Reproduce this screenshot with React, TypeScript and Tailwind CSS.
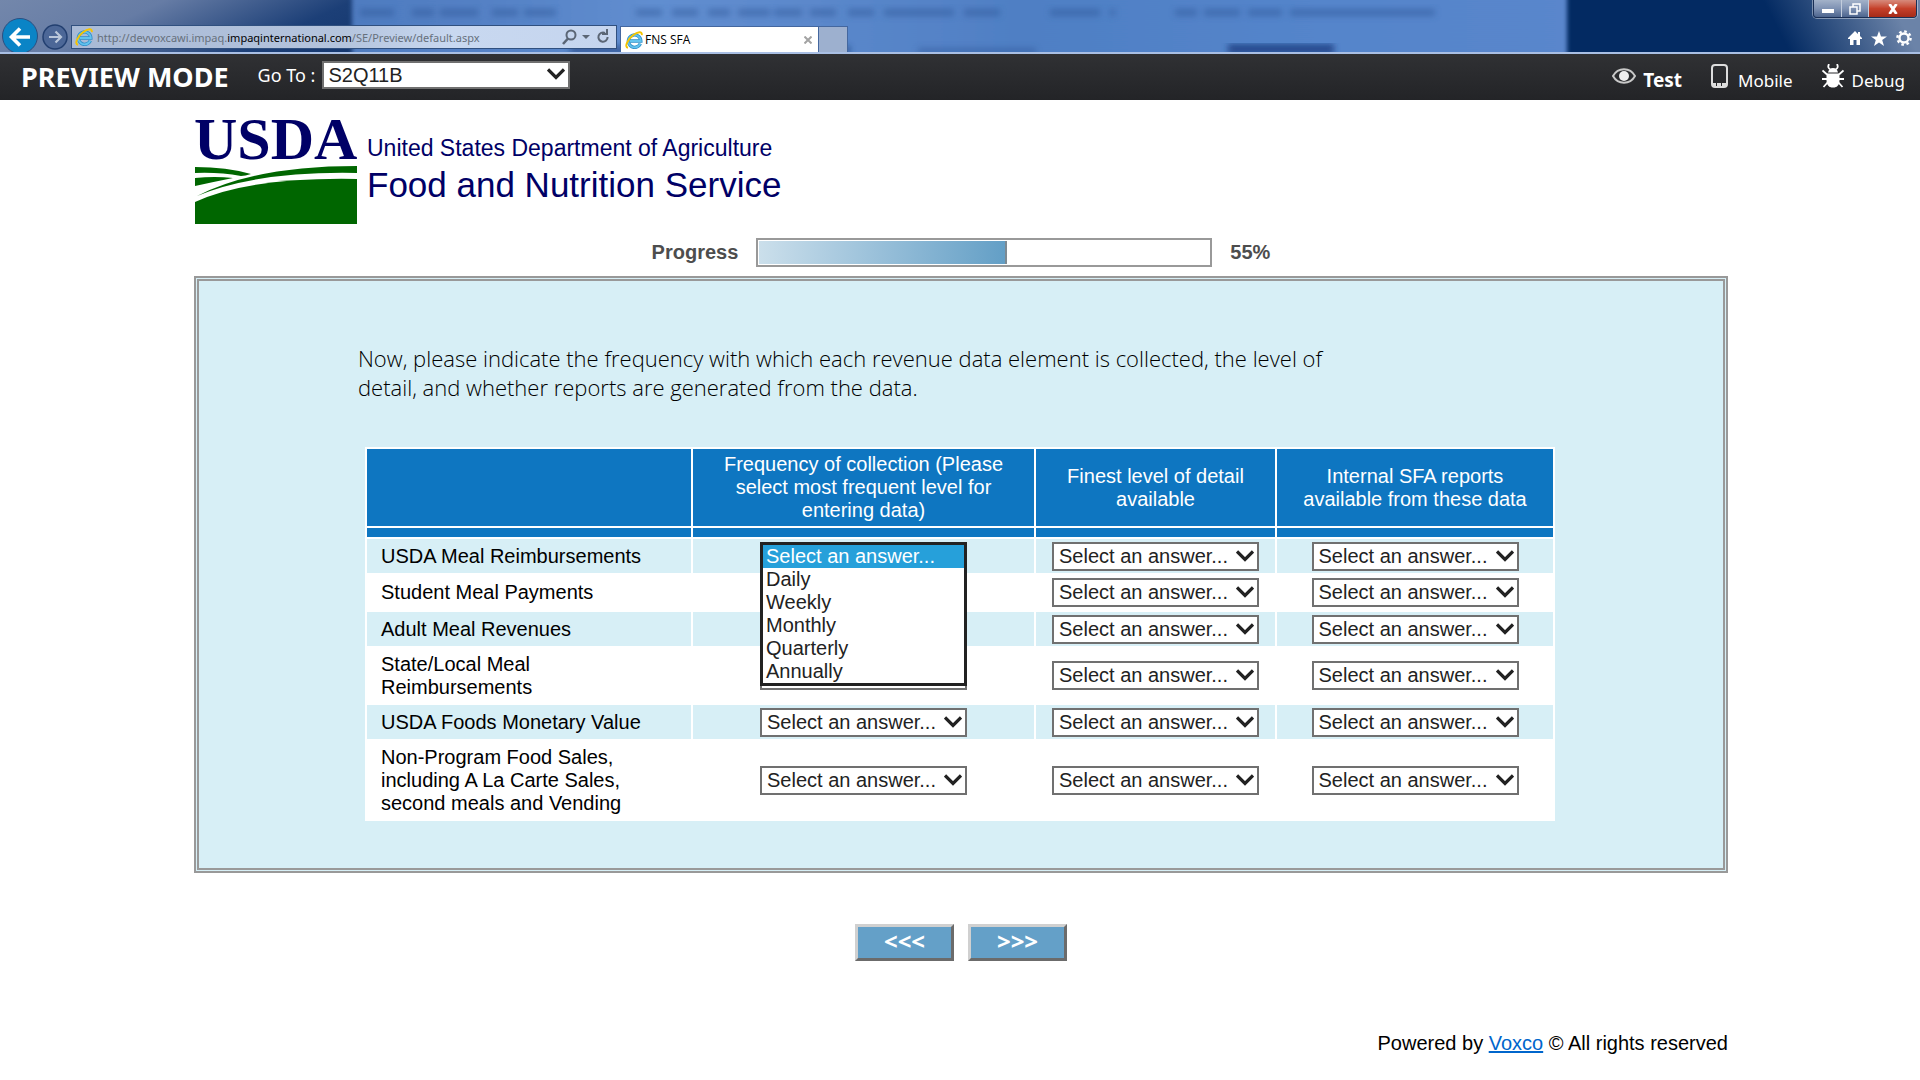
import React, { useState } from 'react'

const FREQUENCIES = ['Select an answer...', 'Daily', 'Weekly', 'Monthly', 'Quarterly', 'Annually']
const DETAILS = ['Select an answer...', 'School', 'District']
const REPORTS = ['Select an answer...', 'Yes', 'No']

interface Question {
  id: string
  label: string
  height: string
}

const questions: Question[] = [
  { id: 'reimb', label: 'USDA Meal Reimbursements', height: 'h-[34px]' },
  { id: 'student', label: 'Student Meal Payments', height: 'h-[35px]' },
  { id: 'adult', label: 'Adult Meal Revenues', height: 'h-[34px]' },
  { id: 'state', label: 'State/Local Meal Reimbursements', height: 'h-[55px]' },
  { id: 'foods', label: 'USDA Foods Monetary Value', height: 'h-[34px]' },
  { id: 'nonprogram', label: 'Non-Program Food Sales, including A La Carte Sales, second meals and Vending', height: 'h-[78px]' },
]

// blurred desktop text showing through the glass frame: [x, width]
const ghosts = [
  [360, 34], [412, 22], [440, 38], [492, 26], [524, 32],
  [636, 26], [672, 26], [708, 22], [738, 32], [774, 28], [810, 26], [848, 26], [884, 70], [964, 36],
  [1050, 50], [1110, 5], [1175, 22], [1204, 36], [1248, 34], [1290, 145],
]

const Chevron = ({ className }: { className: string }) => (
  <svg viewBox="0 0 18 12" className={`pointer-events-none absolute h-3 w-[18px] ${className}`} fill="none" stroke="#222" strokeWidth="3.2">
    <path d="M1 1.5 9 9.5 17 1.5" />
  </svg>
)

const IeLogo = () => (
  <svg viewBox="0 0 18 18" className="h-[18px] w-[18px] shrink-0" fill="none">
    <path d="M15.300 12.600A6.200 6.200 0 1 1 15.800 10H5" stroke="#2f8fc9" strokeWidth="3.400" />
    <path d="M15.300 12.600A6.200 6.200 0 1 1 15.800 10H5" stroke="#62c3ee" strokeWidth="1.800" />
    <path d="M3 16.800C-1 16 2.500 8.500 8 4.300 12.500.8 17.500-.4 16.800 4.200" stroke="#f5c400" strokeWidth="1.900" />
  </svg>
)

interface AnswerProps {
  label: string
  options: string[]
  open?: boolean
}

const Answer: React.FC<AnswerProps> = ({ label, options, open }) => {
  const [value, setValue] = useState(options[0])
  const [expanded, setExpanded] = useState(!!open)

  return (
    <div className="relative mx-auto h-[29px] w-[207px]">
      <select
        aria-label={label}
        value={value}
        onChange={e => setValue(e.target.value)}
        className="block h-full w-full appearance-none border-2 border-[#707070] bg-white pl-[5px] text-[20px] leading-[23px] text-[#222]"
      >
        {options.map(o => <option key={o}>{o}</option>)}
      </select>
      <Chevron className="right-[5px] top-2" />
      {expanded && (
        <ul role="listbox" aria-label={label} className="absolute left-0 top-0 z-10 w-full border-[3px] border-[#222] bg-white text-left text-[20px] leading-[23px] text-[#222]">
          {options.map(o => (
            <li
              key={o}
              role="option"
              aria-selected={o === value}
              onClick={() => { setValue(o); setExpanded(false) }}
              className={`pl-[3px] ${o === value ? 'bg-[#26a0da] text-white' : ''}`}
            >
              {o}
            </li>
          ))}
        </ul>
      )}
    </div>
  )
}

const BrowserBar = () => (
  <header className="relative flex h-[54px] items-end border-b-2 border-[#a9bfe4] bg-[linear-gradient(155deg,#7387ab_0px,#667ca5_70px,#1c3f77_150px,#0a2c64_260px)] font-['Open_Sans',sans-serif]">
    <svg className="absolute inset-0 h-full w-full" preserveAspectRatio="none" viewBox="0 0 1920 52">
      <defs>
        <linearGradient id="glass" x1="0" x2="1" y1="0" y2="0">
          <stop offset="0" stopColor="#4f7cc0" />
          <stop offset=".1" stopColor="#5380c4" />
          <stop offset=".25" stopColor="#618ed0" />
          <stop offset=".38" stopColor="#5b88cb" />
          <stop offset=".55" stopColor="#4f7fc4" />
          <stop offset=".8" stopColor="#5485cb" />
          <stop offset="1" stopColor="#5a86cc" />
        </linearGradient>
        <linearGradient id="corner" gradientUnits="userSpaceOnUse" x1="1790" y1="52" x2="1890" y2="0">
          <stop offset="0" stopColor="#032a62" />
          <stop offset="1" stopColor="#6b83a8" />
        </linearGradient>
        <filter id="soft"><feGaussianBlur stdDeviation="3" /></filter>
        <filter id="edge"><feGaussianBlur stdDeviation="2 0" /></filter>
      </defs>
      <rect x="1566" width="354" height="54" fill="url(#corner)" />
      <rect x="352" y="-4" width="1215" height="62" fill="url(#glass)" filter="url(#edge)" />
      <g filter="url(#soft)" fill="#2f5798" opacity=".5">
        {ghosts.map(([x, w]) => <rect key={x} x={x} y="9" width={w} height="7" />)}
        <rect x="570" y="46" width="280" height="8" fill="#0d2f68" />
        <rect x="918" y="48" width="118" height="6" />
      </g>
      <rect x="1228" y="44" width="106" height="10" fill="#1a4183" opacity=".85" filter="url(#soft)" />
    </svg>
    <nav className="relative flex w-full items-end">
      <button aria-label="Back" className="ml-[2px] h-[34px] w-9 overflow-hidden">
        <svg viewBox="0 0 36 34" className="h-[34px] w-9">
          <circle cx="18" cy="18" r="17.500" fill="#0a84c6" stroke="#2c4f80" />
          <path d="M28 19H10M18 10.500 9.500 19 18 27.500" stroke="#fff" strokeWidth="3.600" fill="none" />
        </svg>
      </button>
      <button aria-label="Forward" className="mb-[1px] ml-1 h-7 w-[26px]">
        <svg viewBox="0 0 26 28" className="h-7 w-[26px]">
          <circle cx="13" cy="14" r="12" fill="#4c6797" stroke="#223f70" strokeWidth="1.500" />
          <path d="M7 14H19M13.500 8.500 19 14 13.500 19.500" stroke="#b9c6da" strokeWidth="2.200" fill="none" />
        </svg>
      </button>
      <div className="mb-[3px] ml-[3px] flex h-6 w-[546px] items-center border border-[#30507f] bg-[linear-gradient(90deg,#a9bad6,#b4c4dd_50%,#c8d8f0_70%,#c5d5ee)] pl-[3px]">
        <IeLogo />
        <span className="ml-1 flex-1 whitespace-nowrap font-['Noto_Sans',sans-serif] text-[11px] text-[#66707c]">
          http://devvoxcawi.impaq.<span className="text-black">impaqinternational.com</span>/SE/Preview/default.aspx
        </span>
        <svg viewBox="0 0 54 16" className="h-4 w-[54px]" fill="none" stroke="#5b6675" strokeWidth="2">
          <circle cx="9" cy="6" r="4.500" />
          <path d="M6 9.500 1 15" strokeWidth="2.600" />
          <path d="M20 6h8l-4 4z" fill="#5b6675" stroke="none" />
          <path d="M43 4A4.600 4.600 0 1 0 45.600 8" />
          <path d="M40 5h5V0" />
        </svg>
      </div>
      <div className="ml-[3px] flex h-[26px] w-[199px] items-center border-x border-t border-[#44679f] bg-white pl-1 pr-[6px]">
        <IeLogo />
        <span className="ml-[2px] flex-1 text-[12px] text-black">FNS SFA</span>
        <button aria-label="Close tab">
          <svg viewBox="0 0 8 8" className="h-2 w-2" stroke="#a3a3a3" strokeWidth="2"><path d="M.5.5l7 7M7.500.5l-7 7" /></svg>
        </button>
      </div>
      <button aria-label="New tab" className="h-[26px] w-[29px] border-r border-t border-[#44679f] bg-[#9db0cf]" />
      <div className="mb-[6px] ml-auto mr-2 flex items-center gap-[9px]">
        <button aria-label="Home">
          <svg viewBox="0 0 14 14" className="h-[14px] w-[14px]" fill="#fff"><path d="M7 0 0 7v1h2v6h3.500V9h3v5H12V8h2V7l-2-2V1h-2v2z" /></svg>
        </button>
        <button aria-label="Favorites">
          <svg viewBox="0 0 16 15" className="h-[15px] w-4" fill="#fff"><path d="m8 0 2 5.500h6L11.200 9 13 15 8 11.400 3 15l1.800-6L0 5.500h6z" /></svg>
        </button>
        <button aria-label="Tools">
          <svg viewBox="0 0 16 16" className="h-4 w-4" fill="none" stroke="#fff">
            <circle cx="8" cy="8" r="4.500" strokeWidth="2.400" />
            <circle cx="8" cy="8" r="6.600" strokeWidth="2.400" strokeDasharray="2.600 2.580" />
          </svg>
        </button>
      </div>
    </nav>
    <div className="absolute right-[3px] top-0 flex h-[18px] w-[104px] overflow-hidden rounded-b border border-t-0 border-[#1a2f55] ring-1 ring-white/40">
      <button aria-label="Minimize" className="flex w-[28px] items-center justify-center border-r border-[#c3cddd] bg-linear-to-b from-[#a3b2c9] via-[#7f92b3] to-[#4d658e]">
        <span className="mt-1 h-1 w-3 bg-white" />
      </button>
      <button aria-label="Restore" className="flex w-[27px] items-center justify-center border-r border-[#c3cddd] bg-linear-to-b from-[#a3b2c9] via-[#7f92b3] to-[#4d658e]">
        <svg viewBox="0 0 12 12" className="h-3 w-3" fill="none" stroke="#fff" strokeWidth="1.500"><path d="M1 4h7v7H1zM4 3.500V1h7v7H8.500" /></svg>
      </button>
      <button aria-label="Close" className="flex flex-1 items-center justify-center bg-linear-to-b from-[#d68a7c] via-[#c5402a] to-[#a52a18]">
        <svg viewBox="0 0 12 10" className="h-[10px] w-3" stroke="#fff" strokeWidth="2.800"><path d="M2.500 0l7 10M9.500 0l-7 10" /></svg>
      </button>
    </div>
  </header>
)

const PreviewBar = () => (
  <div className="flex h-[46px] items-center bg-linear-to-b from-[#303134] to-[#232427] pl-[21px] pr-[15px] font-['Noto_Sans',sans-serif] text-white">
    <strong className="text-[27px] leading-[46px]">PREVIEW MODE</strong>
    <label htmlFor="goto" className="ml-[29px] pb-1 text-[18px]">Go To :</label>
    <div className="relative mb-1 ml-[7px] h-7 w-[248px]">
      <select id="goto" defaultValue="S2Q11B" className="block h-full w-full appearance-none border-2 border-[#707070] bg-white pl-1 font-['Liberation_Sans',sans-serif] text-[20px] leading-6 text-[#222]">
        <option>S2Q11B</option>
      </select>
      <Chevron className="right-[5px] top-[7px]" />
    </div>
    <div className="ml-auto flex items-center gap-[29px] pt-[6px] text-[17px]">
      <button className="flex items-center gap-[7px] text-[19px] font-bold">
        <svg viewBox="0 0 24 16" className="mb-2 h-4 w-6" fill="none" stroke="#c8c8c8" strokeWidth="2">
          <path d="M1 8C6-1 18-1 23 8 18 17 6 17 1 8z" />
          <circle cx="12" cy="8" r="5" fill="#eee" stroke="none" />
        </svg>
        Test
      </button>
      <button className="flex items-center gap-[9px]">
        <svg viewBox="0 0 18 24" className="mb-2 h-6 w-[18px]" fill="none" stroke="#ddd" strokeWidth="2">
          <rect x="1" y="1" width="15" height="22" rx="3" />
          <path d="M1 20.500h15" strokeWidth="3" strokeDasharray="4 1" />
        </svg>
        Mobile
      </button>
      <button className="flex items-center gap-2">
        <svg viewBox="0 0 22 24" className="mb-2 h-6 w-[22px]" fill="#fff" stroke="#fff">
          <path d="M7 0Q5 4 8.500 5.500M15 0q2 4-1.500 5.500M.5 6.500 5 10.500M21.500 6.500 17 10.500M0 15h5M22 15h-5M1.500 23 6 18M20.500 23 16 18" fill="none" strokeWidth="1.800" />
          <path d="M6 8.500Q7 4 11 4t5 4.500zM4.500 9.500h13v7q0 6-5 7h-3q-5-1-5-7z" stroke="none" />
        </svg>
        Debug
      </button>
    </div>
  </div>
)

const AgencyLogo = () => (
  <div className="flex h-[125px] gap-[10px] pt-[10px] text-[#000066]">
    <div className="w-[163px]">
      <div className="h-14 font-['Liberation_Serif',serif] text-[60px] font-bold leading-[58px]">USDA</div>
      <svg viewBox="0 0 162 58" className="ml-px block h-[58px] w-[162px]" fill="#006600">
        <path d="M0 1Q32 1 56 8Q50 10 46 10Q24 6 0 7z" />
        <path d="M0 12Q20 10 38 12Q18 16 0 20z" />
        <path d="M2 30Q60 0 162 0V7Q62 5 2 30z" />
        <path d="M0 36Q54 11 162 13V58H0z" />
      </svg>
    </div>
    <div className="pt-[25px]">
      <div className="text-[23px] leading-[26px]">United States Department of Agriculture</div>
      <div className="mt-[3px] text-[35px] leading-[42px]">Food and Nutrition Service</div>
    </div>
  </div>
)

export default function App() {
  const progress = 55

  return (
    <div className="min-h-screen bg-white font-['Liberation_Sans',Arial,sans-serif] text-[20px] leading-[23px] text-black">
      <BrowserBar />
      <PreviewBar />
      <main className="pl-[194px] pr-[192px]">
        <AgencyLogo />

        <div className="mt-[13px] flex items-center justify-center font-bold text-[#4d4d4d]">
          <span id="progress-label">Progress</span>
          <div role="progressbar" aria-labelledby="progress-label" aria-valuenow={progress} className="mx-[18px] h-[29px] w-[456px] border-2 border-[#999] bg-white p-[1px]">
            <div className="h-full border-r-2 border-[#7d8a92] bg-linear-to-r from-[#cbdfeb] to-[#639fc6]" style={{ width: `${progress}%` }} />
          </div>
          <span>{progress}%</span>
        </div>

        <section className="mt-[9px] border-[5px] border-double border-[#999] bg-[#d7eff6] px-[159px] pb-[47px] pt-[63px]">
          <p className="max-w-[980px] font-['Open_Sans',sans-serif] text-[22px] font-light leading-[29px]">
            Now, please indicate the frequency with which each revenue data element is collected, the level of detail, and whether reports are generated from the data.
          </p>

          <table className="ml-[7px] mt-[45px] w-[1190px] table-fixed border-separate border-spacing-[2px] bg-white">
            <colgroup>
              <col className="w-[324px]" />
              <col className="w-[341px]" />
              <col className="w-[239px]" />
              <col />
            </colgroup>
            <thead>
              <tr className="h-[77px] bg-[#0e76c1] text-white">
                <td />
                <th className="px-5 py-0 font-normal">Frequency of collection (Please select most frequent level for entering data)</th>
                <th className="px-5 py-0 font-normal">Finest level of detail available</th>
                <th className="px-5 py-0 font-normal">Internal SFA reports available from these data</th>
              </tr>
              <tr className="h-[9px] bg-[#0e76c1]">
                <td className="p-0" />
                <td className="p-0" />
                <td className="p-0" />
                <td className="p-0" />
              </tr>
            </thead>
            <tbody>
              {questions.map((q, i) => (
                <tr key={q.id} className={`${q.height} ${i % 2 === 0 ? 'bg-[#d7eff6]' : 'bg-white'}`}>
                  <th scope="row" className="py-0 pl-[14px] pr-4 text-left font-normal">{q.label}</th>
                  <td className="p-0"><Answer label={`${q.label} frequency`} options={FREQUENCIES} open={i === 0} /></td>
                  <td className="p-0"><Answer label={`${q.label} detail`} options={DETAILS} /></td>
                  <td className="p-0"><Answer label={`${q.label} reports`} options={REPORTS} /></td>
                </tr>
              ))}
            </tbody>
          </table>
        </section>

        <div className="mt-[51px] flex justify-center gap-[14px] font-['Noto_Sans',sans-serif] text-[24px] font-bold text-white">
          <button className="flex h-[37px] w-[99px] items-center justify-center border-[3px] border-b-[#6b6b6b] border-l-[#d0d0d0] border-r-[#6b6b6b] border-t-[#d0d0d0] bg-[#64a0c8] pb-1">&lt;&lt;&lt;</button>
          <button className="flex h-[37px] w-[99px] items-center justify-center border-[3px] border-b-[#6b6b6b] border-l-[#d0d0d0] border-r-[#6b6b6b] border-t-[#d0d0d0] bg-[#64a0c8] pb-1">&gt;&gt;&gt;</button>
        </div>

        <footer className="mt-[71px] text-right">
          Powered by <a href="#voxco" className="text-[#0066cc] underline">Voxco</a> © All rights reserved
        </footer>
      </main>
    </div>
  )
}
